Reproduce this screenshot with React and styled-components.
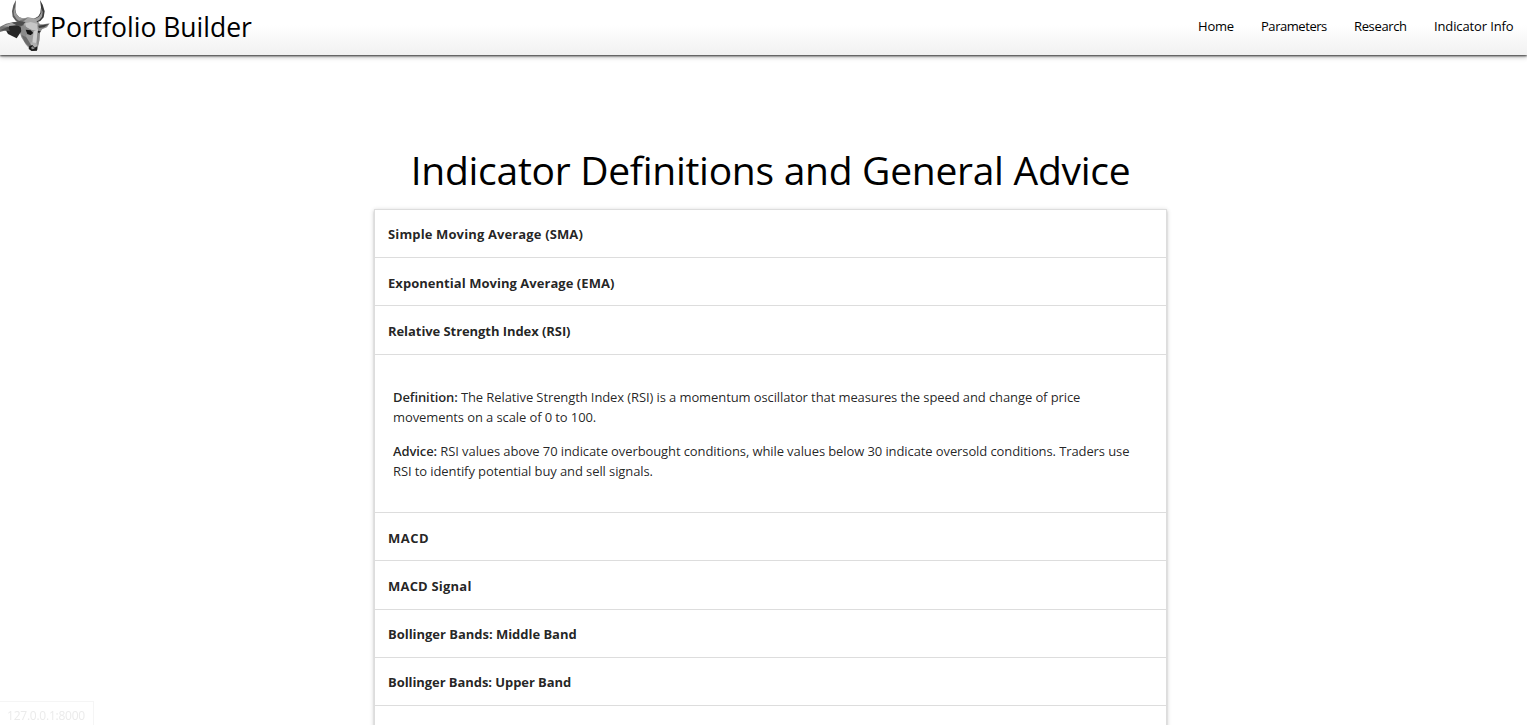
import React from "react";
import styled, { createGlobalStyle } from "styled-components";

const Global = createGlobalStyle`
  * { box-sizing: border-box; }
  html, body { margin: 0; height: 100%; overflow: hidden; }
  body {
    background: #fff;
    font-family: "Open Sans", "Noto Sans", sans-serif;
    color: rgba(0, 0, 0, 0.87);
  }
`;

const Page = styled.div`
  width: 1527px;
  height: 725px;
  overflow: hidden;
`;

const Nav = styled.nav`
  height: 55px;
  display: flex;
  align-items: flex-start;
  justify-content: space-between;
  background: linear-gradient(#fff 0%, #fff 45%, #f1f1f1 100%);
  box-shadow: 0 1px 2px rgba(0, 0, 0, 0.75), 0 2px 5px rgba(0, 0, 0, 0.25);
`;

const Brand = styled.a`
  display: flex;
  height: 55px;
  line-height: 54px;
  color: #000;
  font-size: 26.5px;
  letter-spacing: 0;
  white-space: nowrap;
`;

const BullMark = styled.svg`
  width: 50px;
  height: 52px;
  flex: none;
`;

const Links = styled.div`
  display: flex;
  padding-right: 13px;
  gap: 27px;
  font-size: 13px;
  color: #000;
`;

const NavLink = styled.a`
  width: ${(p) => p.$width}px;
  white-space: nowrap;
  line-height: 53px;
  letter-spacing: ${(p) => p.$track}px;
`;

const Main = styled.main`
  width: 793px;
  margin: 87px 0 0 374px;
`;

const Title = styled.h1`
  margin: 0 0 12px;
  height: 55px;
  line-height: 56px;
  text-align: center;
  font-size: 39px;
  font-weight: 400;
  letter-spacing: -0.28px;
  color: #000;
  white-space: nowrap;
`;

const Accordion = styled.ul`
  list-style: none;
  margin: 0;
  padding: 0;
  width: 793px;
  height: 560px;
  border: 1px solid #ddd;
  box-shadow: 0 1.8px 1.8px rgba(0, 0, 0, 0.14), 0 3px 1px -2px rgba(0, 0, 0, 0.12), 0 1px 4.5px rgba(0, 0, 0, 0.2);
`;

const Header = styled.div`
  height: ${(p) => p.$height}px;
  line-height: ${(p) => p.$line}px;
  padding: 0 13px;
  border-bottom: 1px solid #ddd;
  font-size: 13px;
  font-weight: 700;
  letter-spacing: ${(p) => p.$track}px;
  white-space: nowrap;
`;

const Body = styled.div`
  height: 158px;
  padding: 32px 18px;
  border-bottom: 1px solid #ddd;
  font-size: 13px;
  line-height: 20px;
  letter-spacing: -0.1px;
  white-space: nowrap;
`;

const Paragraph = styled.p`
  margin: 0 0 14px;
`;

const Term = styled.b`
  font-weight: 600;
`;

const StatusUrl = styled.div`
  position: fixed;
  left: 0;
  bottom: 0;
  width: 94px;
  height: 24px;
  padding-left: 7px;
  border: solid #f5f5f5;
  border-width: 1px 1px 0 0;
  font-size: 12px;
  line-height: 27px;
  letter-spacing: -0.23px;
  color: #ebebeb;
`;

const links = [
  { label: "Home", width: 36, track: -0.2 },
  { label: "Parameters", width: 66, track: -0.45 },
  { label: "Research", width: 53, track: -0.36 },
  { label: "Indicator Info", width: 80, track: -0.12 },
];

const items = [
  { title: "Simple Moving Average (SMA)", height: 48, line: 49, track: 0.13 },
  { title: "Exponential Moving Average (EMA)", height: 48, line: 51, track: 0.04 },
  { title: "Relative Strength Index (RSI)", height: 49, line: 51, track: -0.07, open: true },
  { title: "MACD", height: 48, line: 50, track: 0.5 },
  { title: "MACD Signal", height: 49, line: 51, track: 0.2 },
  { title: "Bollinger Bands: Middle Band", height: 48, line: 49, track: -0.03 },
  { title: "Bollinger Bands: Upper Band", height: 48, line: 49, track: -0.07 },
];

const facets = [
  // silhouette of the head
  ["#8d8d8d", "44,68 62,58 84,52 108,56 118,70 127,86 120,98 118,122 112,150 94,152 78,134 64,112 58,92"],
  // horns
  ["#5a5a5a", "48,0 40,16 36,34 38,50 47,62 64,70 72,58 58,52 49,42 46,28"],
  ["#9a9a9a", "45,22 47,38 56,50 68,55 84,53 78,66 62,66 50,58 42,46 41,34"],
  ["#3a3a3a", "120,0 128,14 134,34 131,52 121,63 107,68 102,56 115,49 121,38 123,22"],
  ["#a0a0a0", "124,24 124,38 117,50 103,57 106,66 118,60 126,50 128,36"],
  // neck and shoulder
  ["#747474", "0,80 18,71 40,66 66,66 64,84 30,82 8,94 0,96"],
  ["#a4a4a4", "8,79 34,68 58,74 28,80"],
  ["#262626", "28,78 60,75 65,92 50,115 24,102 19,93"],
  ["#505050", "0,91 24,80 30,94 16,92"],
  // skull
  ["#757575", "44,70 62,60 84,53 76,74 60,80"],
  ["#a6a6a6", "84,53 107,56 113,72 90,68 74,78 68,66"],
  ["#c6c6c6", "76,70 92,66 114,72 114,94 96,90 78,82"],
  ["#8a8a8a", "62,78 78,80 93,91 80,96 79,112 66,104"],
  // ears
  ["#4c4c4c", "36,68 58,63 77,66 66,77 52,77"],
  ["#8b8b8b", "112,73 130,73 149,70 141,82 126,88 113,88"],
  ["#3e3e3e", "115,77 147,72 132,82 117,84"],
  // eyes
  ["#141414", "77,89 92,91 100,99 93,106 82,102"],
  ["#242424", "114,92 122,94 117,103 113,100"],
  // face and muzzle
  ["#9c9c9c", "78,104 92,106 101,98 101,120 92,138 80,122"],
  ["#cecece", "101,94 112,90 114,112 110,132 97,128"],
  ["#8a8a8a", "112,100 119,97 118,120 113,142 109,131"],
  ["#b0b0b0", "94,127 109,129 114,143 98,142 88,137"],
  ["#6a6a6a", "64,104 79,112 93,134 90,143 74,126"],
  ["#1c1c1c", "88,138 97,135 104,143 112,139 111,152 95,153 86,147"],
  ["#8f8f8f", "93,143 98,139 104,146 96,148"],
];

function Bull() {
  return (
    <BullMark viewBox="0 0 150 156" aria-hidden="true">
      {facets.map(([fill, points]) => (
        <polygon key={points} fill={fill} points={points} />
      ))}
    </BullMark>
  );
}

export default function App() {
  return (
    <Page>
      <Global />
      <Nav>
        <Brand>
          <Bull />
          Portfolio Builder
        </Brand>
        <Links>
          {links.map((l) => (
            <NavLink key={l.label} $width={l.width} $track={l.track}>
              {l.label}
            </NavLink>
          ))}
        </Links>
      </Nav>
      <Main>
        <Title>Indicator Definitions and General Advice</Title>
        <Accordion>
          {items.map((it) => (
            <li key={it.title}>
              <Header $height={it.height} $line={it.line} $track={it.track}>
                {it.title}
              </Header>
              {it.open && (
                <Body>
                  <Paragraph>
                    <Term>Definition:</Term> The Relative Strength Index (RSI) is a momentum oscillator that measures the speed and change of price
                    <br />
                    movements on a scale of 0 to 100.
                  </Paragraph>
                  <Paragraph>
                    <Term>Advice:</Term> RSI values above 70 indicate overbought conditions, while values below 30 indicate oversold conditions. Traders use
                    <br />
                    RSI to identify potential buy and sell signals.
                  </Paragraph>
                </Body>
              )}
            </li>
          ))}
        </Accordion>
      </Main>
      <StatusUrl>127.0.0.1:8000</StatusUrl>
    </Page>
  );
}
